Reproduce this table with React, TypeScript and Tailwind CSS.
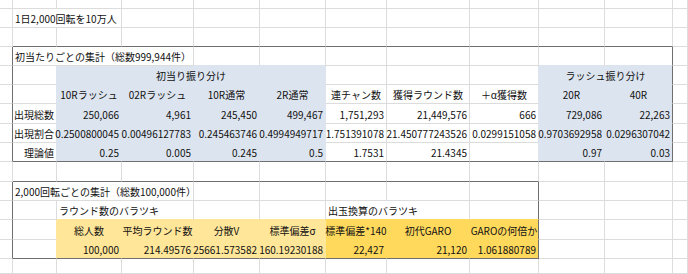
import React from "react";

type Fill = "blue" | "ly" | "y";
type Align = "l" | "r" | "c";
type Cell = { t?: string; a?: Align; f?: Fill; s?: number };

const e = (n: number): Cell[] => Array.from({ length: n }, () => ({}));
const blue = (t: string, a: Align = "r"): Cell => ({ t, a, f: "blue" });
const ly = (t: string, a: Align = "r"): Cell => ({ t, a, f: "ly" });
const yl = (t: string, a: Align = "r"): Cell => ({ t, a, f: "y" });
const r = (t: string): Cell => ({ t, a: "r" });
const c = (t: string): Cell => ({ t, a: "c" });

const rows: Cell[][] = [
  e(12),
  [{}, { t: "1日2,000回転を10万人", s: 2 }, ...e(9)],
  e(12),
  [{}, { t: "初当たりごとの集計（総数999,944件）", s: 3 }, ...e(8)],
  [
    {},
    {},
    { t: "初当り振り分け", a: "c", f: "blue", s: 4 },
    {},
    {},
    {},
    { t: "ラッシュ振り分け", a: "c", f: "blue", s: 2 },
    {},
  ],
  [
    {},
    {},
    blue("10Rラッシュ", "c"),
    blue("02Rラッシュ", "c"),
    blue("10R通常", "c"),
    blue("2R通常", "c"),
    c("連チャン数"),
    c("獲得ラウンド数"),
    c("＋α獲得数"),
    blue("20R", "c"),
    blue("40R", "c"),
    {},
  ],
  [
    {},
    r("出現総数"),
    blue("250,066"),
    blue("4,961"),
    blue("245,450"),
    blue("499,467"),
    r("1,751,293"),
    r("21,449,576"),
    r("666"),
    blue("729,086"),
    blue("22,263"),
    {},
  ],
  [
    {},
    r("出現割合"),
    blue("0.2500800045"),
    blue("0.00496127783"),
    blue("0.245463746"),
    blue("0.4994949717"),
    r("1.751391078"),
    r("21.450777243526"),
    r("0.0299151058"),
    blue("0.9703692958"),
    blue("0.0296307042"),
    {},
  ],
  [
    {},
    r("理論値"),
    blue("0.25"),
    blue("0.005"),
    blue("0.245"),
    blue("0.5"),
    r("1.7531"),
    r("21.4345"),
    {},
    blue("0.97"),
    blue("0.03"),
    {},
  ],
  e(12),
  [{}, { t: "2,000回転ごとの集計（総数100,000件）", s: 3 }, ...e(8)],
  [
    {},
    {},
    { t: "ラウンド数のバラツキ", s: 2 },
    {},
    {},
    { t: "出玉換算のバラツキ", s: 2 },
    {},
    {},
    {},
    {},
  ],
  [
    {},
    {},
    ly("総人数", "c"),
    ly("平均ラウンド数", "c"),
    ly("分散V", "c"),
    ly("標準偏差σ", "c"),
    yl("標準偏差*140", "c"),
    yl("初代GARO", "c"),
    yl("GAROの何倍か", "c"),
    {},
    {},
    {},
  ],
  [
    {},
    {},
    ly("100,000"),
    ly("214.49576"),
    ly("25661.573582"),
    ly("160.19230188"),
    yl("22,427"),
    yl("21,120"),
    yl("1.061880789"),
    {},
    {},
    {},
  ],
  e(12),
];

// outlined blocks: rows r0..r1, columns c0..c1
const tables = [
  { r0: 3, r1: 8, c0: 1, c1: 10 },
  { r0: 10, r1: 13, c0: 1, c1: 8 },
];

type Edge = "grid" | "dark" | Fill;

const bgCls: Record<Fill, string> = {
  blue: "bg-[#dce4ef]",
  ly: "bg-[#ffe699]",
  y: "bg-[#ffd95c]",
};

const rightCls: Record<Edge, string> = {
  grid: "border-r-[#dcdcdc]",
  dark: "border-r-[#6f6f6f]",
  blue: "border-r-[#dce4ef]",
  ly: "border-r-[#ffe699]",
  y: "border-r-[#ffd95c]",
};

const bottomCls: Record<Edge, string> = {
  grid: "border-b-[#dcdcdc]",
  dark: "border-b-[#6f6f6f]",
  blue: "border-b-[#dce4ef]",
  ly: "border-b-[#ffe699]",
  y: "border-b-[#ffd95c]",
};

const alignCls: Record<Align, string> = {
  l: "justify-start",
  r: "justify-end",
  c: "justify-center",
};

const spanCls: Record<number, string> = {
  1: "col-span-1",
  2: "col-span-2",
  3: "col-span-3",
  4: "col-span-4",
};

// fill of each grid position, with spans expanded
const fills: (Fill | undefined)[][] = rows.map((row) => {
  const out: (Fill | undefined)[] = [];
  row.forEach((cell) => {
    for (let i = 0; i < (cell.s ?? 1); i++) out.push(cell.f);
  });
  return out;
});

function edges(ri: number, c0: number, c1: number, f?: Fill) {
  let right: Edge = "grid";
  let bottom: Edge = "grid";

  const rn = fills[ri]?.[c1 + 1];
  if (
    tables.some(
      (t) => ri >= t.r0 && ri <= t.r1 && (c1 + 1 === t.c0 || c1 === t.c1),
    )
  )
    right = "dark";
  else if (f) right = f;
  else if (rn) right = rn;

  const bn = fills[ri + 1]?.[c0];
  if (
    tables.some(
      (t) => c0 >= t.c0 && c1 <= t.c1 && (ri + 1 === t.r0 || ri === t.r1),
    )
  )
    bottom = "dark";
  else if (f) bottom = f;
  else if (bn) bottom = bn;

  return { right, bottom };
}

export default function App() {
  return (
    <div
      className="w-[688px] h-[274px] overflow-hidden bg-white text-[10px] leading-[12px] text-[#111]"
      style={{ fontFamily: '"Noto Sans CJK JP", "Noto Sans", sans-serif' }}
    >
      <div className="grid grid-cols-[13px_44px_65px_72px_66px_66px_61px_83px_69px_66px_68px_1fr] grid-rows-[9px_19px_19px_19px_19px_19px_20px_19px_19px_20px_19px_19px_20px_19px_15px] h-full">
        {rows.map((row, ri) => {
          let col = 0;
          return row.map((cell, ci) => {
            const span = cell.s ?? 1;
            const c0 = col;
            const c1 = col + span - 1;
            col += span;
            const { right, bottom } = edges(ri, c0, c1, cell.f);
            return (
              <div
                key={`${ri}-${ci}`}
                className={[
                  "flex items-end whitespace-nowrap px-[2px] pb-[2px] border-r border-b min-w-0",
                  spanCls[span],
                  alignCls[cell.a ?? "l"],
                  cell.f ? bgCls[cell.f] : "bg-white",
                  rightCls[right],
                  bottomCls[bottom],
                ].join(" ")}
              >
                {cell.t}
              </div>
            );
          });
        })}
      </div>
    </div>
  );
}
